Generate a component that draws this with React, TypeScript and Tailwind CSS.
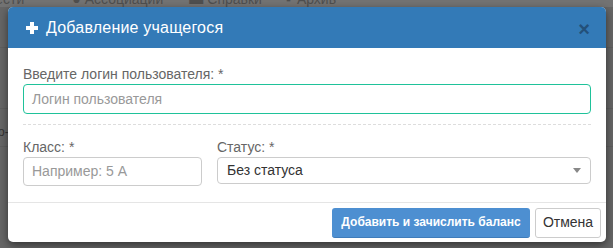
import React from "react";

export default function App() {
  const font = { fontFamily: '"Liberation Sans", Arial, sans-serif' };
  return (
    <div className="relative w-[613px] h-[248px] overflow-hidden bg-[#666666]" style={font}>
      {/* page behind overlay */}
      <div className="absolute inset-0">
        <div className="h-[7px] bg-[#737373] relative overflow-hidden text-[14px] leading-[14px] text-[#4f4f4f]">
          <div className="absolute left-0 right-0 top-[-8px] flex whitespace-nowrap">
            <span className="ml-[-14px]">Лести</span>
            <span className="ml-[48px]">●</span>
            <span className="ml-[4px]">Ассоциации</span>
            <span className="ml-[26px]">▬</span>
            <span className="ml-[4px]">Справки</span>
            <span className="ml-[24px]">▪</span>
            <span className="ml-[6px]">Архив</span>
          </div>
        </div>
        <div className="mt-[40px] h-px bg-[#5e5e5e]" />
        <div className="mt-[60px] h-px bg-[#5e5e5e]" />
        <div className="mt-[17px] text-[12px] leading-[12px] text-[#333] -ml-[2px]">о-</div>
        <div className="mt-[8px] h-px bg-[#5e5e5e]" />
      </div>

      {/* modal */}
      <div className="absolute left-[8px] top-[7px] w-[598px] h-[235px] bg-white rounded-[5px] shadow-[0_3px_9px_rgba(0,0,0,0.5)] flex flex-col overflow-hidden">
        <div className="h-[41px] bg-[#337ab7] flex items-center pl-[18px] pr-[16px] shrink-0">
          <svg width="12" height="12" viewBox="0 0 12 12" className="mr-[8px]">
            <rect x="4" y="0" width="4" height="12" fill="#fff" />
            <rect x="0" y="4" width="12" height="4" fill="#fff" />
          </svg>
          <span className="text-white text-[16px] leading-[20px] tracking-[0.2px]">Добавление учащегося</span>
          <span className="ml-auto text-[#23507a] text-[20px] font-bold leading-[20px] mt-[2px]">×</span>
        </div>

        <div className="px-[15px] pt-[16px] flex-1">
          <div className="text-[14px] leading-[20px] text-[#666]">Введите логин пользователя: *</div>
          <div className="h-[30px] border border-[#1fc29a] rounded-[4px] flex items-center px-[8px] text-[14px] text-[#999]">
            Логин пользователя
          </div>
          <div className="mt-[10px] border-t border-dashed border-[#dddddd]" />
          <div className="mt-[12px] flex gap-[15px]">
            <div className="w-[179px]">
              <div className="text-[14px] leading-[20px] text-[#666]">Класс: *</div>
              <div className="h-[29px] border border-[#cccccc] rounded-[4px] flex items-center px-[8px] text-[14px] text-[#999]">
                Например: 5 А
              </div>
            </div>
            <div className="flex-1">
              <div className="text-[14px] leading-[20px] text-[#666]">Статус: *</div>
              <div className="h-[27px] border border-[#cccccc] rounded-[4px] flex items-center pl-[9px] pr-[9px] text-[14px] text-[#333]">
                Без статуса
                <svg width="8" height="5" viewBox="0 0 8 5" className="ml-auto">
                  <path d="M0 0 L8 0 L4 5 Z" fill="#888" />
                </svg>
              </div>
            </div>
          </div>
        </div>

        <div className="h-[40px] border-t border-[#e5e5e5] flex items-center justify-end gap-[5px] pr-[5px] shrink-0">
          <div className="h-[30px] w-[198px] bg-[#4d8fd1] rounded-[3px] border-b border-[#3f7cba] flex items-center justify-center text-white text-[12px] font-bold">
            Добавить и зачислить баланс
          </div>
          <div className="h-[30px] w-[66px] bg-white border border-[#cccccc] rounded-[3px] flex items-center justify-center text-[#333] text-[14px]">
            Отмена
          </div>
        </div>
      </div>
    </div>
  );
}
